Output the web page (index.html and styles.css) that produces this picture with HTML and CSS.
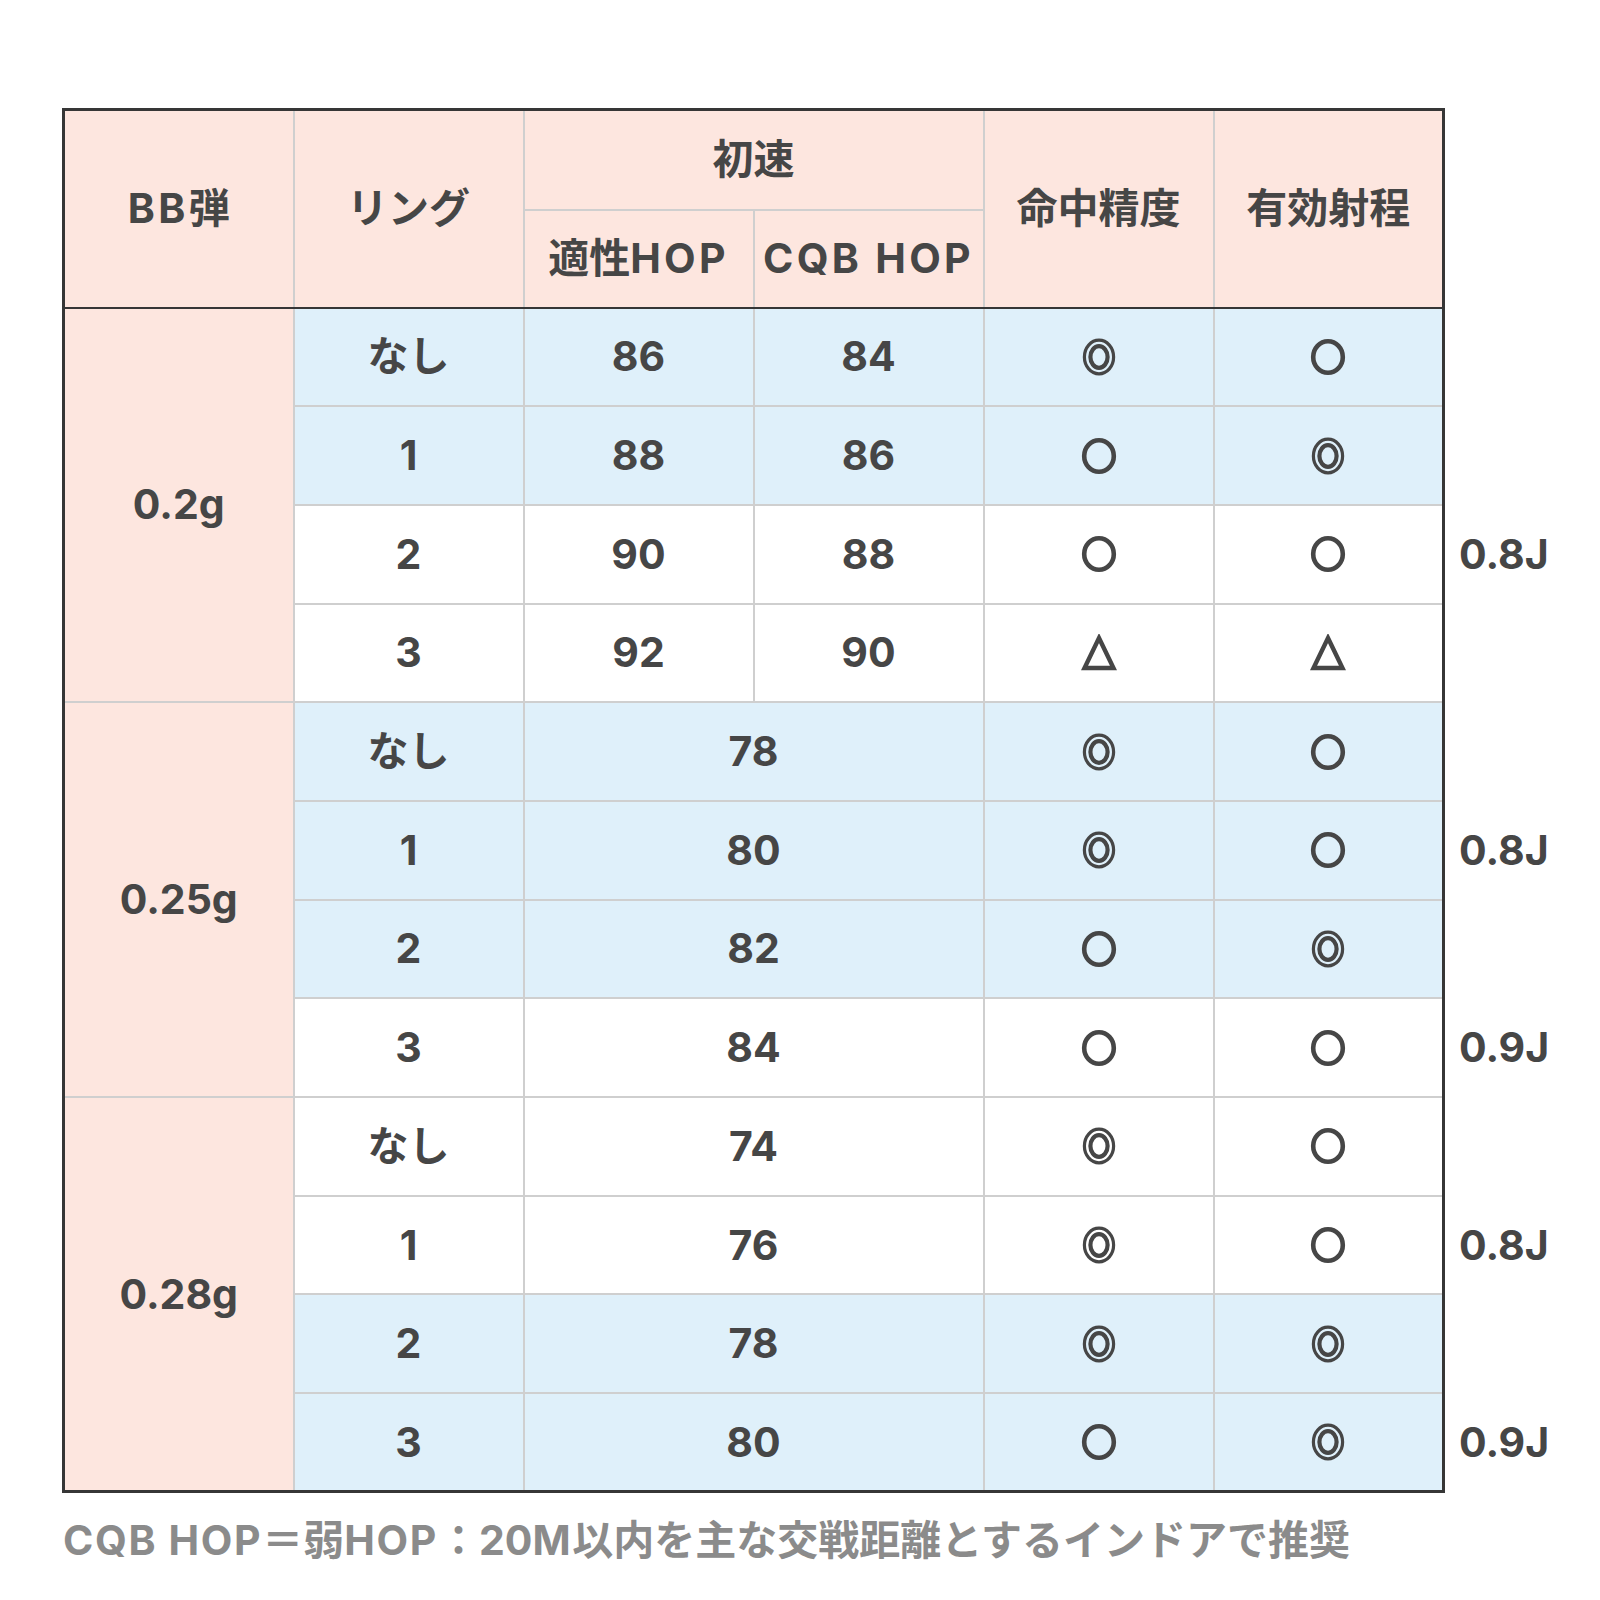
FILE: index.html
```html
<!DOCTYPE html>
<html lang="ja">
<head>
<meta charset="utf-8">
<title>BB弾 初速表</title>
<link rel="stylesheet" href="styles.css">
</head>
<body>
<div class="page">
<table class="spec">
  <colgroup>
    <col class="c"><col class="c"><col class="c"><col class="c"><col class="c"><col class="c"><col class="cs">
  </colgroup>
  <thead>
    <tr class="h1">
      <th rowspan="2" class="first"><span class="lat">BB</span>弾</th>
      <th rowspan="2">リング</th>
      <th colspan="2">初速</th>
      <th rowspan="2">命中精度</th>
      <th rowspan="2" class="last">有効射程</th>
      <td rowspan="2" class="side"></td>
    </tr>
    <tr class="h2">
      <th>適性<span class="lat">HOP</span></th>
      <th><span class="lat">CQB HOP</span></th>
    </tr>
  </thead>
  <tbody>
    <tr class="b">
      <td rowspan="4" class="first bb">0.2g</td>
      <td>なし</td><td>86</td><td>84</td>
      <td><svg class="mk" viewBox="0 0 36 38"><ellipse cx="18" cy="19" rx="14.6" ry="16.8" class="o1"/><ellipse cx="18" cy="19" rx="8.6" ry="10.8" class="o2"/></svg></td>
      <td class="last"><svg class="mk" viewBox="0 0 36 38"><ellipse cx="18" cy="19" rx="14.8" ry="15.8" class="o"/></svg></td>
      <td class="side"></td>
    </tr>
    <tr class="b">
      <td>1</td><td>88</td><td>86</td>
      <td><svg class="mk" viewBox="0 0 36 38"><ellipse cx="18" cy="19" rx="14.8" ry="15.8" class="o"/></svg></td>
      <td class="last"><svg class="mk" viewBox="0 0 36 38"><ellipse cx="18" cy="19" rx="14.6" ry="16.8" class="o1"/><ellipse cx="18" cy="19" rx="8.6" ry="10.8" class="o2"/></svg></td>
      <td class="side"></td>
    </tr>
    <tr class="w">
      <td>2</td><td>90</td><td>88</td>
      <td><svg class="mk" viewBox="0 0 36 38"><ellipse cx="18" cy="19" rx="14.8" ry="15.8" class="o"/></svg></td>
      <td class="last"><svg class="mk" viewBox="0 0 36 38"><ellipse cx="18" cy="19" rx="14.8" ry="15.8" class="o"/></svg></td>
      <td class="side">0.8J</td>
    </tr>
    <tr class="w">
      <td>3</td><td>92</td><td>90</td>
      <td><svg class="mk" viewBox="0 0 36 38"><path d="M18 4 L32.5 34 L3.5 34 Z" class="t"/></svg></td>
      <td class="last"><svg class="mk" viewBox="0 0 36 38"><path d="M18 4 L32.5 34 L3.5 34 Z" class="t"/></svg></td>
      <td class="side"></td>
    </tr>

    <tr class="b gs">
      <td rowspan="4" class="first bb">0.25g</td>
      <td>なし</td><td colspan="2">78</td>
      <td><svg class="mk" viewBox="0 0 36 38"><ellipse cx="18" cy="19" rx="14.6" ry="16.8" class="o1"/><ellipse cx="18" cy="19" rx="8.6" ry="10.8" class="o2"/></svg></td>
      <td class="last"><svg class="mk" viewBox="0 0 36 38"><ellipse cx="18" cy="19" rx="14.8" ry="15.8" class="o"/></svg></td>
      <td class="side"></td>
    </tr>
    <tr class="b">
      <td>1</td><td colspan="2">80</td>
      <td><svg class="mk" viewBox="0 0 36 38"><ellipse cx="18" cy="19" rx="14.6" ry="16.8" class="o1"/><ellipse cx="18" cy="19" rx="8.6" ry="10.8" class="o2"/></svg></td>
      <td class="last"><svg class="mk" viewBox="0 0 36 38"><ellipse cx="18" cy="19" rx="14.8" ry="15.8" class="o"/></svg></td>
      <td class="side">0.8J</td>
    </tr>
    <tr class="b">
      <td>2</td><td colspan="2">82</td>
      <td><svg class="mk" viewBox="0 0 36 38"><ellipse cx="18" cy="19" rx="14.8" ry="15.8" class="o"/></svg></td>
      <td class="last"><svg class="mk" viewBox="0 0 36 38"><ellipse cx="18" cy="19" rx="14.6" ry="16.8" class="o1"/><ellipse cx="18" cy="19" rx="8.6" ry="10.8" class="o2"/></svg></td>
      <td class="side"></td>
    </tr>
    <tr class="w">
      <td>3</td><td colspan="2">84</td>
      <td><svg class="mk" viewBox="0 0 36 38"><ellipse cx="18" cy="19" rx="14.8" ry="15.8" class="o"/></svg></td>
      <td class="last"><svg class="mk" viewBox="0 0 36 38"><ellipse cx="18" cy="19" rx="14.8" ry="15.8" class="o"/></svg></td>
      <td class="side">0.9J</td>
    </tr>

    <tr class="w gs">
      <td rowspan="4" class="first bb bottom">0.28g</td>
      <td>なし</td><td colspan="2">74</td>
      <td><svg class="mk" viewBox="0 0 36 38"><ellipse cx="18" cy="19" rx="14.6" ry="16.8" class="o1"/><ellipse cx="18" cy="19" rx="8.6" ry="10.8" class="o2"/></svg></td>
      <td class="last"><svg class="mk" viewBox="0 0 36 38"><ellipse cx="18" cy="19" rx="14.8" ry="15.8" class="o"/></svg></td>
      <td class="side"></td>
    </tr>
    <tr class="w">
      <td>1</td><td colspan="2">76</td>
      <td><svg class="mk" viewBox="0 0 36 38"><ellipse cx="18" cy="19" rx="14.6" ry="16.8" class="o1"/><ellipse cx="18" cy="19" rx="8.6" ry="10.8" class="o2"/></svg></td>
      <td class="last"><svg class="mk" viewBox="0 0 36 38"><ellipse cx="18" cy="19" rx="14.8" ry="15.8" class="o"/></svg></td>
      <td class="side">0.8J</td>
    </tr>
    <tr class="b">
      <td>2</td><td colspan="2">78</td>
      <td><svg class="mk" viewBox="0 0 36 38"><ellipse cx="18" cy="19" rx="14.6" ry="16.8" class="o1"/><ellipse cx="18" cy="19" rx="8.6" ry="10.8" class="o2"/></svg></td>
      <td class="last"><svg class="mk" viewBox="0 0 36 38"><ellipse cx="18" cy="19" rx="14.6" ry="16.8" class="o1"/><ellipse cx="18" cy="19" rx="8.6" ry="10.8" class="o2"/></svg></td>
      <td class="side"></td>
    </tr>
    <tr class="b end">
      <td>3</td><td colspan="2">80</td>
      <td><svg class="mk" viewBox="0 0 36 38"><ellipse cx="18" cy="19" rx="14.8" ry="15.8" class="o"/></svg></td>
      <td class="last"><svg class="mk" viewBox="0 0 36 38"><ellipse cx="18" cy="19" rx="14.6" ry="16.8" class="o1"/><ellipse cx="18" cy="19" rx="8.6" ry="10.8" class="o2"/></svg></td>
      <td class="side">0.9J</td>
    </tr>
  </tbody>
</table>
<p class="note"><span class="lat">CQB HOP</span>＝弱<span class="lat">HOP</span>：20<span class="lat">M</span>以内を主な交戦距離とするインドアで推奨</p>
</div>
</body>
</html>
```

FILE: styles.css
```css
html, body {
  margin: 0;
  padding: 0;
  background: #ffffff;
}

body {
  font-family: Inter, "Noto Sans CJK JP", sans-serif;
  color: #464646;
}

.page {
  padding: 108px 0 0 62px;
}

.spec {
  border-collapse: collapse;
  table-layout: fixed;
  width: 1530px;
  font-size: 41px;
  font-weight: 700;
}

.spec col.c {
  width: 230px;
}

.spec col.cs {
  width: 150px;
}

.spec th,
.spec td {
  border: 2px solid #cfcfcf;
  padding: 0;
  text-align: center;
  vertical-align: middle;
  line-height: 1;
  white-space: nowrap;
}

.lat {
  letter-spacing: 0.08em;
}

.spec thead th {
  background: #fde6df;
  font-weight: 700;
  border-top: 3px solid #363636;
  border-bottom: 2px solid #363636;
}

.spec thead tr.h2 th {
  border-top: 2px solid #cfcfcf;
}

.spec thead tr.h1 th[colspan] {
  border-bottom: 2px solid #cfcfcf;
}

.spec tr.h1 {
  height: 100px;
}

.spec tr.h2 {
  height: 98px;
}

.spec tbody tr {
  height: 98.7px;
}

.spec tr.b td {
  background: #dff0fa;
}

.spec tr.w td {
  background: #ffffff;
}

.spec td.bb,
.spec tr.b td.bb,
.spec tr.w td.bb {
  background: #fde6df;
}

.spec .first {
  border-left: 3px solid #363636;
}

.spec .last {
  border-right: 3px solid #363636;
}

.spec tr.gs td {
  border-top: 2px solid #363636;
}

.spec tr.end td,
.spec td.bottom {
  border-bottom: 3px solid #363636;
}

.spec td.side,
.spec tr.b td.side,
.spec tr.w td.side,
.spec tr.gs td.side,
.spec tr.end td.side {
  border: none;
  background: transparent;
  text-align: left;
  padding-left: 14px;
}

.mk {
  display: block;
  width: 36px;
  height: 38px;
  margin: 0 auto;
}

.mk .o {
  fill: none;
  stroke: #464646;
  stroke-width: 4.6;
}

.mk .o1 {
  fill: none;
  stroke: #464646;
  stroke-width: 3.2;
}

.mk .o2 {
  fill: none;
  stroke: #464646;
  stroke-width: 4.2;
}

.mk .t {
  fill: none;
  stroke: #464646;
  stroke-width: 4.4;
  stroke-linejoin: miter;
}

.note {
  margin: 23px 0 0 1px;
  font-size: 41px;
  font-weight: 700;
  color: #8b8b8b;
  line-height: 1.2;
}

.note .lat {
  letter-spacing: 0.04em;
}
```
